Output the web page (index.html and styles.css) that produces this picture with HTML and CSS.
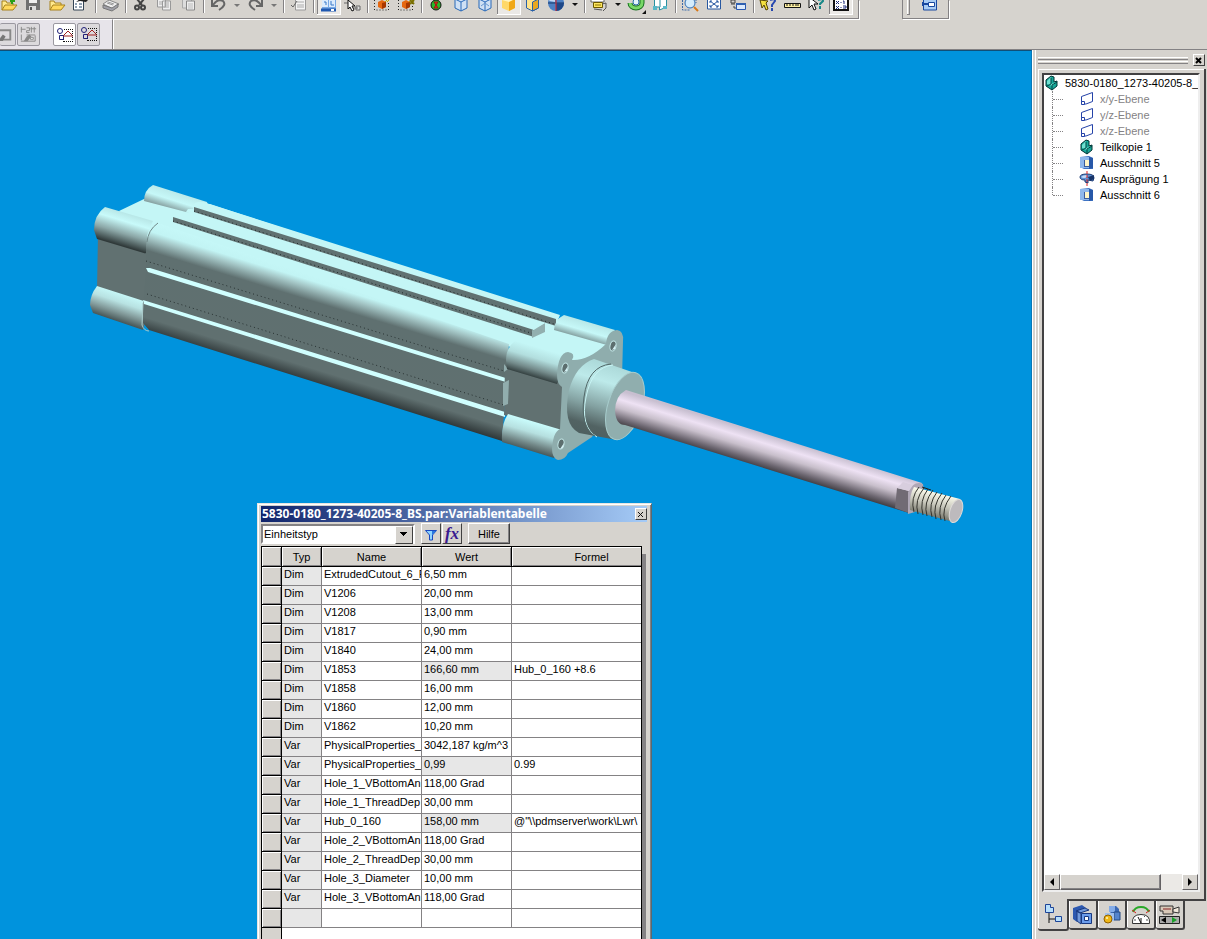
FILE: index.html
```html
<!DOCTYPE html>
<html lang="de">
<head>
<meta charset="utf-8">
<title>5830-0180_1273-40205-8_BS.par</title>
<link rel="stylesheet" href="styles.css">
</head>
<body>
<svg class="defs" aria-hidden="true">
  <defs>
    <symbol id="folder" viewBox="0 0 24 17"><path d="M5 10V1h4l1 2h6v2" fill="#ffe98c" stroke="#a8821c"/><path d="M5 10l3-5h12l-4 5z" fill="#ffd95c" stroke="#a8821c"/></symbol>
    <symbol id="plane" viewBox="0 0 16 16"><path d="M2.500 5.500L13.500 1.500v9L7 13H2.500z" fill="#fff" stroke="#2442a8"/><path d="M2.500 10.500h3v3h-3z" fill="#fff" stroke="#2442a8"/></symbol>
    <symbol id="part" viewBox="0 0 16 16"><path d="M2 5l5-4 3 1v5l3-1v5l-5 4-6-4z" fill="#18a898" stroke="#033"/><path d="M3 6l4-4v7l5-2-4 4-5-2z" fill="#6fe0d0"/><path d="M7 3v6l-4 2M8 10l5-3M8 10v5" fill="none" stroke="#044"/></symbol>
    <symbol id="cutout" viewBox="0 0 16 16"><path d="M1 2l9-1 4 2v11H5l-4-2z" fill="#3f74c4"/><path d="M1 2h9v11H1z" fill="#8fb8ec"/><path d="M10 2l4 1v10l-4 1z" fill="#2858a8"/><path d="M5 5h5v6H5z" fill="#fff6c8"/><path d="M5 5h1v6h4v1H5z" fill="#3a5c9c"/></symbol>
    <symbol id="revolve" viewBox="0 0 16 16"><path d="M1 6Q1 3 8 3t7 4l-1 3-5-1v3l-3-1V9Q1 9 1 6z" fill="#5f92d4" stroke="#203c74"/><path d="M2 6q2-2 6-2v2q-3 2-6 0z" fill="#c4dcf8"/><path d="M9 6l6-2v4l-4 2z" fill="#183468"/><path d="M8 0v16" stroke="#e02020" stroke-dasharray="3 1"/></symbol>
    <symbol id="cube" viewBox="0 0 24 17"><path d="M6-1l6 3 6-3M12 2v9M6-1v9l6 3 6-3v-9" fill="#cfe0f4" stroke="#2868b8"/></symbol>
    <symbol id="relate" viewBox="0 0 18 16"><path d="M8 2.500h9M16.500 2v13M8 14.500h9M7.500 8v7" stroke="#111" stroke-dasharray="1 1" fill="none"/><circle cx="4" cy="4" r="2.500" fill="none" stroke="#202078"/><path d="M3.500 8.500h4v4h-4z" fill="none" stroke="#202078"/><path d="M7 9h10M8 8l4-4 4 4" fill="none" stroke="#a02020"/></symbol>
    <symbol id="box-select" viewBox="0 0 24 17"><path d="M3.500 0v10h14V3" fill="none" stroke="#222" stroke-dasharray="1 2"/><path d="M7 2l4-2 4 2v5l-4 2-4-2z" fill="#e66810"/><path d="M11 3v6l4-2V2z" fill="#a83800"/><path d="M14 2l3-3M16 2l3-3" stroke="#c8a800"/></symbol>
  </defs>
</svg>

<header class="bars">
  <div class="bar-row">
    <div class="toolbar toolbar-main" role="toolbar" aria-label="Haupt">
      <button class="tool" aria-label="Neu"><svg><use href="#folder"/><path d="M13 1h5M15 0v4" stroke="#28a018" stroke-width="2"/></svg></button>
      <button class="tool" aria-label="Speichern"><svg><path d="M5 0h14v10H5z" fill="#707070"/><path d="M8 0h8v3H8z" fill="#eee"/><path d="M8 6h7v4H8z" fill="#ddd"/><path d="M9 7h2v3H9z" fill="#555"/></svg></button>
      <button class="tool" aria-label="Öffnen"><svg><use href="#folder"/></svg></button>
      <button class="tool" aria-label="Eigenschaften"><svg><path d="M4.500-1h10v11h-10z" fill="#fff" stroke="#345"/><path d="M6 4h2M6 7h2M10 4h3M10 7h3" stroke="#246"/><path d="M7 2l4-3 8 1-2 2-6-1z" fill="#222"/></svg></button>
      <i class="sep"></i>
      <button class="tool" aria-label="Drucken"><svg><path d="M4 4l6-4 10 4-6 5z" fill="#eee" stroke="#888"/><path d="M4 5v3l9 3 6-4V4l-6 4z" fill="#a0a0a8" stroke="#777"/><path d="M9 2l6 2M8 3l6 2" stroke="#999"/></svg></button>
      <i class="sep"></i>
      <button class="tool" aria-label="Ausschneiden"><svg><path d="M8-1l5 6M15-1l-5 6" stroke="#444" stroke-width="2"/><circle cx="8" cy="7.500" r="2" fill="none" stroke="#444" stroke-width="2"/><circle cx="14" cy="7.500" r="2" fill="none" stroke="#444" stroke-width="2"/></svg></button>
      <button class="tool" aria-label="Kopieren"><svg><path d="M4.500-1h8v8h-8zM9.500 1h8v9h-8z" fill="#eee" stroke="#999"/><path d="M11 3h5M11 5h5M11 7h5M6 2h3M6 4h3" stroke="#aaa"/></svg></button>
      <button class="tool" aria-label="Einfügen"><svg><path d="M5.500-1h9v9h-9z" fill="#ddd" stroke="#aaa"/><path d="M9.500 1h8v9h-8z" fill="#eee" stroke="#888"/><path d="M11 4h5M11 6h5M11 8h5" stroke="#bbb"/></svg></button>
      <i class="sep"></i>
      <button class="tool" aria-label="Rückgängig"><svg><path d="M5 0v6h6" fill="none" stroke="#666" stroke-width="2"/><path d="M6 5q5-7 10-4q4 4-4 9" fill="none" stroke="#666" stroke-width="2"/></svg></button>
      <button class="drop" aria-label="Rückgängig-Liste"><svg><path d="M3 4h6l-3 3z" fill="#777"/></svg></button>
      <button class="tool" aria-label="Wiederholen"><svg><path d="M18 0v6h-6" fill="none" stroke="#666" stroke-width="2"/><path d="M17 5q-5-7-10-4q-4 4 4 9" fill="none" stroke="#666" stroke-width="2"/></svg></button>
      <button class="drop" aria-label="Wiederholen-Liste"><svg><path d="M3 4h6l-3 3z" fill="#777"/></svg></button>
      <i class="sep"></i>
      <button class="tool" aria-label="Aktualisieren"><svg><path d="M8.500-1h10v11h-10z" fill="#f4f4f4" stroke="#999"/><path d="M10 2h7M10 5h7M10 7h7" stroke="#aaa"/><path d="M4 5l2 2 4-6" fill="none" stroke="#666"/></svg></button>
      <i class="sep"></i>
      <button class="tool pressed" aria-label="EdgeBar"><svg><path d="M5 0h14v11H5z" fill="#78a8e4"/><path d="M5 0h6v7H5zM12 0h6v7h-6z" fill="#dcebfc"/><path d="M7 2h2v3M14 1v4h3" fill="none" stroke="#3878c8"/><path d="M4 8.500h15v3H4z" fill="#2058b0"/><path d="M14 9h3v2h-3z" fill="#fff"/></svg></button>
      <button class="tool" aria-label="Auswahl"><svg><path d="M3 3h5v5h9M15 6h4v4h-4z" fill="#ddd" stroke="#666"/><path d="M7 0v9l2-2 2 4 2-1-2-4h3z" fill="#fff" stroke="#111"/></svg></button>
      <i class="sep"></i>
      <button class="tool" aria-label="Teil aktivieren"><svg><use href="#box-select"/></svg></button>
      <button class="tool" aria-label="Teil deaktivieren"><svg><use href="#box-select"/><path d="M15 0l4 4M15 4l4-4" stroke="#7a7000" stroke-width="2"/></svg></button>
      <i class="sep"></i>
      <button class="tool" aria-label="Farbe"><svg><circle cx="11" cy="5" r="5" fill="#28b828" stroke="#111"/><path d="M9 2h4l-2 3zM9 8h4l-2-3z" fill="#e83020" stroke="#a01010"/></svg></button>
      <button class="tool" aria-label="Drahtmodell"><svg><use href="#cube"/></svg></button>
      <button class="tool" aria-label="Verdeckte Kanten"><svg><use href="#cube"/><path d="M8 6l4-3 4 3" stroke="#6898d0" fill="none"/></svg></button>
      <button class="tool pressed" aria-label="Schattiert"><svg><path d="M5-1h13v9l-6 3-7-3z" fill="#ffd868"/><path d="M12 1v10l6-3v-9z" fill="#f0a818"/><path d="M5-1h13l-6 3-7-2z" fill="#fff4c0"/></svg></button>
      <button class="tool" aria-label="Schattiert mit Kanten"><svg><path d="M5.500-1h12v9l-6 3-6-3z" fill="#ffe48c" stroke="#2860a8"/><path d="M11.500 2v9l6-3v-9z" fill="#e8a820" stroke="#2860a8"/></svg></button>
      <button class="tool" aria-label="Schnitt"><svg><circle cx="11" cy="3" r="8" fill="#4c80c4"/><path d="M3 3h16" stroke="#183868"/><path d="M11 3h8a8 8 0 0 1-8 8z" fill="#1f4888"/><path d="M4 1a8 8 0 0 1 6-4v5z" fill="#c0d8f4"/><path d="M11 0v11" stroke="#e02020"/></svg></button>
      <button class="drop" aria-label="Schnitt-Liste"><svg><path d="M3 3h6l-3 3z" fill="#111"/></svg></button>
      <i class="sep"></i>
      <button class="tool" aria-label="Kamera"><svg><path d="M3-1h13v3H3z" fill="#fff" stroke="#666"/><path d="M5.500 2.500h9v5h-9z" fill="#ffe860" stroke="#6c5800"/><path d="M7 5h6" stroke="#8a7000"/><path d="M14 4l4-1v5l-3 3M6 9l8 1" stroke="#555" fill="none"/></svg></button>
      <button class="drop" aria-label="Kamera-Liste"><svg><path d="M3 3h6l-3 3z" fill="#111"/></svg></button>
      <button class="tool" aria-label="Drehen"><svg><path d="M5 3a6 5 0 0 0 12 0V-1" fill="none" stroke="#187020" stroke-width="5"/><path d="M5 3a6 5 0 0 0 12 0V-1" fill="none" stroke="#78d868" stroke-width="3"/><circle cx="11" cy="2" r="3" fill="#e4f4fc" stroke="#2870a8"/><path d="M21 10v4h-4z" fill="#111"/></svg></button>
      <button class="tool" aria-label="Ansichten"><svg><path d="M5.500 0v7h5v3l7-3V0M11 0v7" fill="#fff" stroke="#2890a0"/><path d="M4 6h4v4H4zM14 6h4v3h-4z" fill="#58b8c8"/></svg></button>
      <i class="sep"></i>
      <button class="tool" aria-label="Zoom Bereich"><svg><path d="M3.500 0v10h8M17-1v4" fill="none" stroke="#3868a8" stroke-dasharray="2 1"/><circle cx="11" cy="3" r="5" fill="#d4ecfc" stroke="#3070b8"/><path d="M15 7l4 4" stroke="#d87818" stroke-width="2"/></svg></button>
      <button class="tool" aria-label="Einpassen"><svg><path d="M4.500-1h13v10h-13z" fill="#fff" stroke="#2858a0"/><path d="M7 1l8 6M15 1l-8 6M7 3V1h2M13 1h2v2M7 5v2h2M13 7h2V5" stroke="#2858a0" fill="none"/></svg></button>
      <button class="tool" aria-label="Fenster"><svg><path d="M4 0h4v3H4zM4 4h4M7 6v2h2" fill="none" stroke="#444"/><path d="M9.500 3.500h9v6h-9z" fill="#dceafc" stroke="#2858b0"/><path d="M9 3h10v2H9z" fill="#3060b0"/></svg></button>
      <i class="sep"></i>
      <button class="tool" aria-label="Info"><svg><path d="M3 0l8 1-2 2 2 6-2 1-2-5-2 3z" fill="#f4e040" stroke="#554400"/><path d="M13 0q5-2 5 1l-3 4v2M15 8v3" stroke="#2848b0" stroke-width="2" fill="none"/></svg></button>
      <button class="tool" aria-label="Messen"><svg><path d="M3.500 3.500h16v4h-16z" fill="#fff0a0" stroke="#111"/><path d="M6 4v2M9 4v2M12 4v2M15 4v2M17 4v2" stroke="#111"/></svg></button>
      <button class="tool" aria-label="Direkthilfe"><svg><path d="M4-3v11l3-3 2 5 2-1-2-5h4z" fill="#fff" stroke="#111"/><path d="M13 0q5-2 5 1l-3 3v1M15 6v3" stroke="#188888" stroke-width="2" fill="none"/></svg></button>
      <button class="tool pressed" aria-label="Variablentabelle"><svg><path d="M5-1h14v11H5z" fill="#fff" stroke="#111" stroke-width="2"/><path d="M7 1l3 3M10 1L7 4M7 6l3 3M10 6L7 9M12 2v1M12 7v1M14 1h1v3M14 6h3v2h-3" stroke="#182878" fill="none"/></svg></button>
    </div>
    <div class="toolbar toolbar-extra" role="toolbar" aria-label="Zusatz">
      <i class="grip"></i>
      <button class="tool" aria-label="Baugruppe"><svg><path d="M5.500-1h13v11h-13z" fill="#a8ccf4" stroke="#1848a0"/><path d="M10.500 2.500h6v4h-6z" fill="#fff" stroke="#1848a0"/><path d="M4 4h6M5 2v4" stroke="#1848a0" stroke-width="2"/></svg></button>
    </div>
  </div>
  <div class="ribbon">
    <div class="ribbon-tools" role="toolbar" aria-label="Beziehungen">
      <button class="rb rb-first" aria-label="Skizze"><svg viewBox="0 0 16 22"><path d="M0 6.500h11v10H2" fill="none" stroke="#888" stroke-width="2"/><path d="M0 15l3-4 3 2-3 5H0z" fill="#777"/></svg></button>
      <button class="rb" aria-label="Bemaßung"><svg viewBox="0 0 22 22"><path d="M3.500 3v6M3 5.500h5M9 4h3v3H9v2h3M14 3v6M17 3v6M13 5h6M3.500 11v6M18 11.500H9M18 12v6H3" fill="none" stroke="#888"/><path d="M9 13l3-2 2 2-4 5H6z" fill="#888"/><path d="M13 14h3v2h-3z" fill="#fff" stroke="#888"/></svg></button>
      <button class="rb rb-on" aria-label="Beziehungen anzeigen"><svg><use href="#relate" x="2" y="3" width="18" height="16"/></svg></button>
      <button class="rb" aria-label="Beziehungen verwalten"><svg><use href="#relate" x="2" y="2" width="18" height="16"/></svg></button>
    </div>
  </div>
</header>

<main class="work">
  <section class="viewport" aria-label="3D-Ansicht">
    <svg class="model" viewBox="0 51 1032 888" preserveAspectRatio="xMinYMin slice" role="img" aria-label="Pneumatikzylinder">
      <defs>
        <linearGradient id="gBody" gradientUnits="userSpaceOnUse" x1="180" y1="224" x2="147" y2="332">
          <stop offset="0" stop-color="#c8fafa"/><stop offset=".14" stop-color="#c2f4f4"/><stop offset=".2" stop-color="#a4c6c6"/><stop offset=".31" stop-color="#5f7070"/><stop offset=".88" stop-color="#607070"/><stop offset="1" stop-color="#30393a"/>
        </linearGradient>
        <linearGradient id="gBossA" gradientUnits="userSpaceOnUse" x1="110" y1="206" x2="100" y2="239">
          <stop offset="0" stop-color="#b4e2e2"/><stop offset=".3" stop-color="#c8fafa"/><stop offset=".65" stop-color="#8ba6a6"/><stop offset="1" stop-color="#303a3a"/>
        </linearGradient>
        <linearGradient id="gBossB" gradientUnits="userSpaceOnUse" x1="158" y1="184" x2="152" y2="203">
          <stop offset="0" stop-color="#b8e6e6"/><stop offset=".55" stop-color="#c6f8f8"/><stop offset="1" stop-color="#86a0a0"/>
        </linearGradient>
        <linearGradient id="gBossC" gradientUnits="userSpaceOnUse" x1="106" y1="287" x2="97" y2="314">
          <stop offset="0" stop-color="#c8fafa"/><stop offset=".35" stop-color="#b8e2e2"/><stop offset=".7" stop-color="#829a9a"/><stop offset="1" stop-color="#4a5959"/>
        </linearGradient>
        <linearGradient id="gFrontA" gradientUnits="userSpaceOnUse" x1="540" y1="348" x2="531" y2="378">
          <stop offset="0" stop-color="#c4f6f6"/><stop offset=".35" stop-color="#b2dede"/><stop offset=".7" stop-color="#748b8b"/><stop offset="1" stop-color="#263030"/>
        </linearGradient>
        <linearGradient id="gFrontB" gradientUnits="userSpaceOnUse" x1="590" y1="323" x2="585" y2="340">
          <stop offset="0" stop-color="#b8e8e8"/><stop offset=".5" stop-color="#c6f8f8"/><stop offset="1" stop-color="#7d9696"/>
        </linearGradient>
        <linearGradient id="gFrontC" gradientUnits="userSpaceOnUse" x1="536" y1="423" x2="528" y2="451">
          <stop offset="0" stop-color="#c8fafa"/><stop offset=".35" stop-color="#b6e0e0"/><stop offset=".75" stop-color="#718686"/><stop offset="1" stop-color="#465555"/>
        </linearGradient>
        <linearGradient id="gCollar" gradientUnits="userSpaceOnUse" x1="606" y1="362" x2="584" y2="435">
          <stop offset="0" stop-color="#abd8d8"/><stop offset=".25" stop-color="#bdeaea"/><stop offset=".6" stop-color="#83a1a1"/><stop offset=".85" stop-color="#526363"/><stop offset="1" stop-color="#4e6060"/>
        </linearGradient>
        <linearGradient id="gRod" gradientUnits="userSpaceOnUse" x1="780" y1="439" x2="770" y2="472">
          <stop offset="0" stop-color="#c8bfd0"/><stop offset=".25" stop-color="#eee2f4"/><stop offset=".5" stop-color="#c8bfcb"/><stop offset=".8" stop-color="#6c6670"/><stop offset="1" stop-color="#383538"/>
        </linearGradient>
        <linearGradient id="gThread" gradientUnits="userSpaceOnUse" x1="938" y1="492" x2="932" y2="517">
          <stop offset="0" stop-color="#fffff0"/><stop offset=".5" stop-color="#c8c8bc"/><stop offset="1" stop-color="#77776c"/>
        </linearGradient>
      </defs>
      <path d="M98 235L146 245V303L97 290Z" fill="#617171"/>
      <path d="M119 211L144 199L210 204L556 318L614 342L567 372L506 345L146 254Z" fill="#c4f6f6"/>
      <path d="M153 185Q144 190 144 201L186 212L210 214L207 202Z" fill="url(#gBossB)"/>
      <path d="M186 212L188 209H193L195 203Q202 200 209 204L560 315L555 327Z" fill="#c4f6f6"/>
      <path d="M105 207Q94 215 94 230L97 239L147 254V236Q149 228 153 221Z" fill="url(#gBossA)"/>
      <path d="M97 286Q90 295 90 305L93 313L143 330L150 303Z" fill="url(#gBossC)"/>
      <path d="M158 223Q147 230 146 246V270L143 303V323L149 330L502 441L509 344Z" fill="url(#gBody)"/>
      <path d="M158 223Q148 230 147 242" fill="none" stroke="#728989"/>
      <path d="M194 207L556 319V326L194 212Z" fill="#607171"/>
      <path d="M173 217L534 330V337L173 222Z" fill="#607171"/>
      <path d="M173 221L534 334M194 211L554 324" stroke="#1f2929" stroke-dasharray="1 3" fill="none"/>
      <path d="M532 331L545 323V332L532 338Z" fill="#92afaf"/><path d="M532 331L537 327L545 323L538 321Z" fill="#c4f6f6"/>
      <path d="M146 261L504 371M147 294L504 405" stroke="#273030" stroke-dasharray="1 3" fill="none"/>
      <path d="M146 268L150 268L509 379V383L148 272Z" fill="#d0ffff"/>
      <path d="M143 300L505 412V417L144 304Z" fill="#d0ffff"/>
      <path d="M143 303L142 325Q144 331 149 331" fill="none" stroke="#a9c9c9"/>
      <path d="M505 365L563 383V431L504 415Z" fill="#617171"/>
      <path d="M503 383L509 380L508 404L503 406Z" fill="#91adad"/>
      <path d="M504 364L508 369L504 372Z" fill="#91adad"/>
      <path d="M564 315Q554 320 554 330L607 345L615 330Z" fill="url(#gFrontB)"/>
      <path d="M515 341L570 352L557 384L507 369Q503 350 515 341Z" fill="url(#gFrontA)"/>
      <path d="M508 414L562 430L554 458L502 442Q501 424 508 414Z" fill="url(#gFrontC)"/>
      <path d="M606 344Q607 331 617 330Q624 331 623 341L622 378L592 437L568 453Q565 460 558 460Q552 458 552 449Q553 432 560 429L562 387Q557 384 557 375Q558 353 568 352Q576 353 572 360Q588 361 606 344Z" fill="#8fadad"/>
      <g fill="#5c6e6e" stroke="#c3e7e7"><ellipse cx="613" cy="346" rx="3" ry="5" transform="rotate(12 613 346)"/><ellipse cx="565" cy="368" rx="3" ry="5" transform="rotate(12 565 368)"/><ellipse cx="561" cy="444" rx="3" ry="5" transform="rotate(12 561 444)"/></g>
      <path d="M612 350L616 344L615 349ZM564 372L568 366L567 371ZM560 449L564 443L563 448Z" fill="#d4f0f4"/>
      <path d="M594 359Q576 365 569 390Q562 424 579 433L617 440L635 373Z" fill="url(#gCollar)"/>
      <path d="M613 365Q592 367 586 397Q580 427 597 437" fill="none" stroke="#c8f4f4"/>
      <path d="M611 364Q588 366 584 397Q580 427 595 436" fill="none" stroke="#526868"/>
      <ellipse cx="625" cy="406" rx="17" ry="35" transform="rotate(18 625 406)" fill="#90aeae" stroke="#a7cccc"/>
      <path d="M626 390Q615 396 615 411Q616 425 625 425L896 509L909 513L922 483Z" fill="url(#gRod)"/>
      <path d="M897 488L909 491V513L895 508Z" fill="#716b74"/>
      <path d="M908 492Q914 480 923 484L924 492L915 512L908 514Z" fill="#afa7b5"/>
      <path d="M897 488L909 491L913 485L903 482Z" fill="#d8cede"/>
      <path d="M914 487L960 499L953 522L910 510Q909 495 914 487Z" fill="url(#gThread)"/>
      <path d="M919 487Q910 498 914 512M924 488Q914 500 918 514M928 489Q919 501 923 515M933 490Q923 503 927 516M937 492Q928 504 932 517M942 493Q932 506 936 519M946 495Q937 507 941 520M951 496Q941 509 945 521" fill="none" stroke="#34342d"/>
      <path d="M922 487L931 490" stroke="#222"/>
      <ellipse cx="956" cy="511" rx="6" ry="12" transform="rotate(18 956 511)" fill="#bdbabd" stroke="#dedbd8"/>
    </svg>

    <section class="dialog" aria-labelledby="dlg-title">
      <div class="dialog-title">
        <h1 id="dlg-title">5830-0180_1273-40205-8_BS.par:Variablentabelle</h1>
        <button class="close" aria-label="Schließen"><svg viewBox="0 0 9 9"><path d="M2 2l5 5M7 2L2 7" stroke="#111" fill="none"/></svg></button>
      </div>
      <div class="dialog-tools">
        <span class="combo"><select aria-label="Einheitstyp"><option>Einheitstyp</option></select></span>
        <span class="pair">
          <button class="sq" aria-label="Filter"><svg viewBox="0 0 18 18"><path d="M3.500 5.500h11L10.500 10v5h-3v-5z" fill="#8fd4ff" stroke="#1848c0"/><path d="M10 6h4l-4 4z" fill="#2878e0"/></svg></button>
          <button class="sq fx" aria-label="Funktion">fx</button>
        </span>
        <button class="help">Hilfe</button>
      </div>
      <div class="grid-area">
        <div class="grid">
          <table>
            <colgroup><col class="c-sel"><col class="c-typ"><col class="c-name"><col class="c-wert"><col class="c-formel"></colgroup>
            <thead><tr><th></th><th>Typ</th><th>Name</th><th>Wert</th><th>Formel</th></tr></thead>
            <tbody>
              <tr><th></th><td>Dim</td><td>ExtrudedCutout_6_F</td><td>6,50 mm</td><td></td></tr>
              <tr><th></th><td>Dim</td><td>V1206</td><td>20,00 mm</td><td></td></tr>
              <tr><th></th><td>Dim</td><td>V1208</td><td>13,00 mm</td><td></td></tr>
              <tr><th></th><td>Dim</td><td>V1817</td><td>0,90 mm</td><td></td></tr>
              <tr><th></th><td>Dim</td><td>V1840</td><td>24,00 mm</td><td></td></tr>
              <tr><th></th><td>Dim</td><td>V1853</td><td class="locked">166,60 mm</td><td>Hub_0_160 +8.6</td></tr>
              <tr><th></th><td>Dim</td><td>V1858</td><td>16,00 mm</td><td></td></tr>
              <tr><th></th><td>Dim</td><td>V1860</td><td>12,00 mm</td><td></td></tr>
              <tr><th></th><td>Dim</td><td>V1862</td><td>10,20 mm</td><td></td></tr>
              <tr><th></th><td>Var</td><td>PhysicalProperties_I</td><td>3042,187 kg/m^3</td><td></td></tr>
              <tr><th></th><td>Var</td><td>PhysicalProperties_/</td><td class="locked">0,99</td><td>0.99</td></tr>
              <tr><th></th><td>Var</td><td>Hole_1_VBottomAn</td><td>118,00 Grad</td><td></td></tr>
              <tr><th></th><td>Var</td><td>Hole_1_ThreadDep</td><td>30,00 mm</td><td></td></tr>
              <tr><th></th><td>Var</td><td>Hub_0_160</td><td class="locked">158,00 mm</td><td>@"\\pdmserver\work\Lwr\</td></tr>
              <tr><th></th><td>Var</td><td>Hole_2_VBottomAn</td><td>118,00 Grad</td><td></td></tr>
              <tr><th></th><td>Var</td><td>Hole_2_ThreadDep</td><td>30,00 mm</td><td></td></tr>
              <tr><th></th><td>Var</td><td>Hole_3_Diameter</td><td>10,00 mm</td><td></td></tr>
              <tr><th></th><td>Var</td><td>Hole_3_VBottomAn</td><td>118,00 Grad</td><td></td></tr>
              <tr><th></th><td></td><td></td><td></td><td></td></tr>
            </tbody>
          </table>
          <div class="grid-rest"></div>
        </div>
        <div class="grid-shade"></div>
      </div>
    </section>
  </section>

  <aside class="side">
    <div class="side-head"><i class="ridges"></i><button class="close" aria-label="EdgeBar schließen"><svg viewBox="0 0 9 9"><path d="M2 2l5 5M7 2L2 7" stroke="#000" stroke-width="2" fill="none"/></svg></button></div>
    <div class="side-body">
      <div class="tree-box">
        <div class="tree">
          <div class="root"><svg><use href="#part"/></svg><span>5830-0180_1273-40205-8_E</span></div>
          <ul>
            <li class="dim"><svg><use href="#plane"/></svg>x/y-Ebene</li>
            <li class="dim"><svg><use href="#plane"/></svg>y/z-Ebene</li>
            <li class="dim"><svg><use href="#plane"/></svg>x/z-Ebene</li>
            <li><svg><use href="#part"/></svg>Teilkopie 1</li>
            <li><svg><use href="#cutout"/></svg>Ausschnitt 5</li>
            <li><svg><use href="#revolve"/></svg>Ausprägung 1</li>
            <li><svg><use href="#cutout"/></svg>Ausschnitt 6</li>
          </ul>
        </div>
        <div class="hscroll">
          <button aria-label="Nach links"><svg viewBox="0 0 10 10"><path d="M7 1v8L3 5z"/></svg></button>
          <div class="track"><div class="thumb"></div></div>
          <button aria-label="Nach rechts"><svg viewBox="0 0 10 10"><path d="M3 1v8l4-4z"/></svg></button>
        </div>
      </div>
    </div>
    <div class="tabs" role="tablist">
      <button class="tab tab-on" role="tab" aria-selected="true" aria-label="Feature PathFinder"><svg viewBox="0 0 24 24"><path d="M4.500 2.500h5v3h3v5h-8z" fill="#b8e0fc" stroke="#1c4498"/><path d="M8 11v10M8 17h6" stroke="#111" fill="none"/><path d="M14.500 14.500h6v5h-6z" fill="#b8e0fc" stroke="#1c4498"/></svg></button>
      <button class="tab" role="tab" aria-label="Feature-Bibliothek"><svg viewBox="0 0 24 24"><path d="M2 5l9-3 4 3-9 3zM2 5l4 2v12l-4-3z" fill="#2c58b0"/><path d="M5 8l9-3 4 2-9 3zM6 8l4 2v11l-4-3z" fill="#7099dc" stroke="#183880"/><path d="M10.500 10.500h10v10h-10z" fill="#6a9cec" stroke="#183880"/><path d="M13.500 13.500h4v4h-4z" fill="#fff" stroke="#183880"/></svg></button>
      <button class="tab" role="tab" aria-label="Familie"><svg viewBox="0 0 24 24"><path d="M9 3h7l3 3v7l-8-1z" fill="#3a68b4"/><path d="M9 3h6v6H9z" fill="#84ace8"/><path d="M14 9h6v8h-6z" fill="#5484cc" stroke="#244880"/><path d="M5 10h9v8H5z" fill="#a0c0ec"/><circle cx="8" cy="16" r="4" fill="#f0b818" stroke="#906000"/><circle cx="7" cy="15" r="1" fill="#fff8c0"/></svg></button>
      <button class="tab" role="tab" aria-label="Sensoren"><svg viewBox="0 0 24 24"><path d="M4 9Q6 4 12 4t8 5" fill="none" stroke="#28a828" stroke-width="2"/><path d="M3 7l4 3M21 7l-4 3" stroke="#d82020"/><path d="M3.500 20.500q-1-9 8.500-9t8.500 9z" fill="#fff" stroke="#333"/><path d="M12 20L9 14M12 20v-5" stroke="#111"/><path d="M5 17h2M17 17h2M15 14l1-1" stroke="#555"/></svg></button>
      <button class="tab" role="tab" aria-label="Wiedergabe"><svg viewBox="0 0 24 24"><path d="M2 3h13v8H5V8H2z" fill="#d8c8b8" stroke="#333"/><path d="M15 6l6-2v6l-6-1z" fill="#f0e8dc" stroke="#333"/><path d="M5 6h8" stroke="#822"/><path d="M1.500 13.500h20v7h-20z" fill="#aaa" stroke="#222"/><path d="M8 14v6l-5-3z"/><path d="M14 14v6l5-3z" fill="#18a028"/></svg></button>
    </div>
  </aside>
</main>
</body>
</html>
```
FILE: styles.css
```css
* { box-sizing: border-box; }

:root {
  --face: #d6d3ce;
  --shade: #848284;
  --sky: #0093dd;
}

body {
  margin: 0;
  height: 100vh;
  display: flex;
  flex-direction: column;
  overflow: hidden;
  background: var(--face);
  font: 11px/16px "Liberation Sans", Arial, sans-serif;
  color: #000;
}

button, select { font: inherit; color: inherit; padding: 0; margin: 0; border: 0; background: none; }
button svg { display: block; overflow: hidden; }
.defs { position: absolute; width: 0; height: 0; }

.bars { flex: none; }
.bar-row { display: flex; gap: 43px; height: 19px; }
.toolbar { display: flex; height: 19px; border-right: 1px solid var(--shade); border-bottom: 1px solid var(--shade); box-shadow: 1px 1px #fff; }
.toolbar-main { margin-left: -3px; padding-right: 5px; }
.tool { flex: none; width: 24px; height: 15px; }
.tool svg { width: 24px; height: 17px; }
.tool.pressed { background: #ebe9e6; border: solid #fff; border-width: 0 1px 1px 0; box-shadow: inset 1px 0 var(--shade); }
.tool.pressed svg { width: 23px; height: 14px; }
.drop { flex: none; width: 13px; height: 15px; }
.drop svg { width: 12px; height: 15px; }
.sep { flex: none; width: 6px; height: 13px; border-left: 2px solid transparent; background: linear-gradient(90deg, var(--shade) 1px, #fff 1px 2px, transparent 2px) no-repeat; }
.toolbar-extra { border-left: 1px solid var(--shade); padding: 0 6px 0 4px; gap: 8px; }
.grip { width: 3px; height: 15px; border: solid var(--shade); border-width: 0 1px 1px 0; box-shadow: inset 1px 0 #fff; }

.ribbon { display: flex; height: 31px; border-bottom: 1px solid var(--shade); }
.ribbon-tools { display: flex; align-items: center; gap: 1px; padding-right: 12px; background: #e7e4ea; border-right: 1px solid var(--shade); border-top: 1px solid #fff; box-shadow: 1px 0 #fff; }
.rb { width: 23px; height: 23px; background: #dcdadd; border: 1px solid #9a98a0; border-radius: 2px; }
.rb svg { width: 21px; height: 21px; }
.rb-first { width: 16px; border-left: 0; }
.rb-first svg { width: 15px; }
.rb-on { margin-left: 12px; background: #fff; }

.work { flex: 1; min-height: 0; display: flex; }
.viewport { position: relative; flex: 1; min-width: 0; overflow: hidden; background: var(--sky); border-top: 1px solid #104f78; border-right: 1px solid #0878b8; }
.model { display: block; width: 100%; height: 100%; }

.dialog {
  position: absolute;
  left: 257px;
  top: 452px;
  bottom: 0;
  width: 395px;
  display: flex;
  flex-direction: column;
  padding: 2px 4px 0 3px;
  background: var(--face);
  border: solid #e8e6e2;
  border-width: 1px 1px 0;
  border-right-color: #5b6870;
  box-shadow: inset 1px 1px #fff, inset -1px 0 var(--shade);
}
.dialog-title { display: flex; align-items: center; height: 16px; padding: 0 0 0 1px; background: linear-gradient(90deg, #10246b, #a5cbf7); }
.dialog-title h1 { flex: 1; margin: 0; font: bold 12px/16px "Noto Sans", "Open Sans", sans-serif; color: #fff; white-space: nowrap; }
.close { flex: none; width: 12px; height: 12px; background: var(--face); border: 1px solid; border-color: #fff #404040 #404040 #fff; }
.close svg { width: 9px; height: 9px; }
.dialog-tools { display: flex; gap: 6px; align-items: center; height: 21px; margin-top: 1px; }
.combo { position: relative; width: 154px; height: 20px; border: 2px solid; border-color: var(--shade) #fff #fff var(--shade); }
.combo select { display: block; width: 100%; height: 16px; padding: 0 18px 0 1px; background: #fff; appearance: none; border-radius: 0; }
.combo::after { content: ""; position: absolute; right: 0; top: 0; width: 16px; height: 16px; pointer-events: none; background: linear-gradient(#000, #000) 4px 5px / 7px 1px no-repeat, linear-gradient(#000, #000) 5px 6px / 5px 1px no-repeat, linear-gradient(#000, #000) 6px 7px / 3px 1px no-repeat, linear-gradient(#000, #000) 7px 8px / 1px 1px no-repeat, var(--face); border: 1px solid; border-color: #fff #404040 #404040 #fff; }
.pair { display: flex; gap: 1px; }
.sq, .help { height: 21px; background: var(--face); border: 1px solid; border-color: #fff #404040 #404040 #fff; }
.sq { width: 20px; }
.sq svg { width: 18px; height: 18px; }
.fx { font: italic bold 17px/16px "Liberation Serif", serif; color: #3a1a90; }
.help { width: 42px; box-shadow: inset -1px -1px var(--shade); }

.grid-area { flex: 1; min-height: 0; display: flex; margin-top: 2px; }
.grid { flex: 1; min-width: 0; display: flex; flex-direction: column; overflow: hidden; border: solid #000; border-width: 1px 1px 0; background: #fff; }
.grid-shade { width: 4px; margin-top: 8px; margin-right: 1px; background: var(--shade); }
table { flex: none; table-layout: fixed; width: 410px; border-collapse: separate; border-spacing: 0; }
.c-sel { width: 20px; }
.c-typ { width: 40px; }
.c-name { width: 100px; }
.c-wert { width: 90px; }
.c-formel { width: 160px; }
th { height: 19px; padding: 0; font-weight: normal; background: var(--face); border: solid #000; border-width: 0 1px 1px 0; box-shadow: inset 1px 1px #fff, inset -1px -1px var(--shade); }
thead th { height: 20px; }
td { height: 19px; padding: 0 2px; line-height: 14px; vertical-align: top; white-space: nowrap; overflow: hidden; border: solid var(--shade); border-width: 0 1px 1px 0; }
td:nth-child(2), .locked { background: #e7e7e7; }
.grid-rest { flex: 1; width: 20px; background: var(--face); border-right: 1px solid #000; }

.side { flex: none; width: 175px; display: flex; flex-direction: column; padding: 4px 1px 9px 5px; border-left: 1px solid #fff; box-shadow: inset 2px 0 var(--face), inset 3px 0 #fff; }
.side-head { display: flex; align-items: center; gap: 5px; height: 12px; padding-right: 1px; }
.ridges { flex: 1; height: 7px; background: linear-gradient(#fff 1px, var(--face) 1px 2px, var(--shade) 2px 3px, var(--face) 3px 4px, #fff 4px 5px, var(--face) 5px 6px, var(--shade) 6px); }
.side-body { flex: 1; min-height: 0; display: flex; margin-top: 3px; padding: 4px 4px 7px 4px; border: solid #424142; border-width: 0 2px 2px 0; box-shadow: inset 1px 1px #fff; }
.tree-box { flex: 1; min-width: 0; display: flex; flex-direction: column; background: #fff; border: 2px solid; border-color: #424142 #eee #eee #424142; }
.tree { flex: 1; overflow: hidden; }
.tree svg { flex: none; width: 16px; height: 16px; }
.root { display: flex; gap: 5px; white-space: nowrap; align-items: center; }
.tree ul { list-style: none; margin: 0 0 0 8px; padding: 0; }
.tree li { position: relative; display: flex; align-items: center; gap: 5px; height: 16px; padding-left: 27px; }
.tree li::before { content: ""; position: absolute; left: 0; top: 0; height: 16px; border-left: 1px dotted var(--shade); }
.tree li:last-child::before { height: 8px; }
.tree li::after { content: ""; position: absolute; left: 1px; top: 8px; width: 10px; border-top: 1px dotted var(--shade); }
.dim { color: #848284; }
.hscroll { display: flex; height: 16px; }
.hscroll button, .thumb { background: var(--face); border: 1px solid; border-color: #fff #636163 #636163 #fff; }
.hscroll button { flex: none; width: 16px; display: flex; align-items: center; justify-content: center; }
.hscroll svg { width: 10px; height: 10px; }
.track { flex: 1; background: #ebe9e6; }
.thumb { width: 83%; height: 16px; box-shadow: inset -1px -1px var(--shade); }
.tabs { display: flex; height: 29px; }
.tab { width: 29px; height: 29px; display: flex; align-items: center; justify-content: center; border: solid #424142; border-width: 0 2px 2px 0; border-radius: 0 0 3px 3px; box-shadow: inset 1px 0 #fff; }
.tab svg { width: 24px; height: 24px; }
.tab-on { width: 31px; height: 32px; margin-top: -2px; background: var(--face); }
```
